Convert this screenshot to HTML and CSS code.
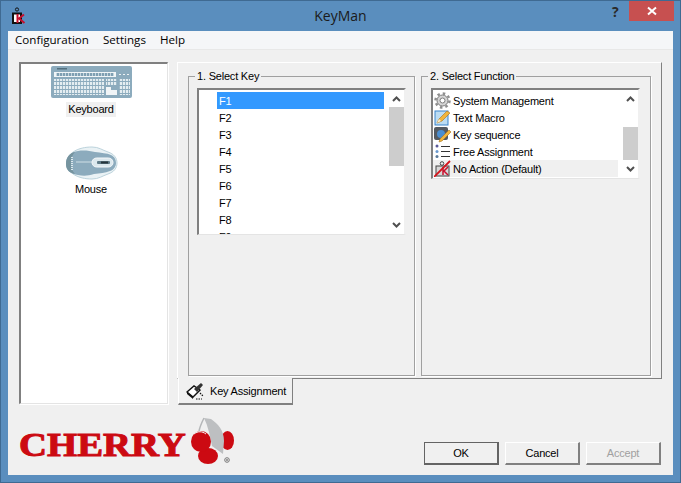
FILE: index.html
```html
<!DOCTYPE html>
<html lang="en">
<head>
<meta charset="utf-8">
<title>KeyMan</title>
<link rel="stylesheet" href="styles.css">
</head>
<body>
<div class="window">
  <header class="titlebar">
    <svg class="app-icon" width="16" height="18" viewBox="0 0 16 18">
      <circle cx="6" cy="2.500" r="1.600" fill="none" stroke="#111" stroke-width="1"/>
      <path d="M2 6.500h8v9.500H2z" fill="#fff" stroke="#111" stroke-width="2"/>
      <path d="M6.500 7v9M13 7.500L8 11.500l5.500 4.500" fill="none" stroke="#c8102e" stroke-width="2"/>
    </svg>
    <div class="title">KeyMan</div>
    <div class="help">?</div>
    <div class="close">
      <svg width="10" height="10" viewBox="0 0 10 10"><path d="M1 1.500l8 7M9 1.500l-8 7" stroke="#fff" stroke-width="2"/></svg>
    </div>
  </header>
  <nav class="menubar">
    <span class="menu-item">Configuration</span>
    <span class="menu-item">Settings</span>
    <span class="menu-item">Help</span>
  </nav>
  <main class="client">
    <div class="top-row">
      <aside class="sidebar">
        <div class="side-item side-keyboard">
          <svg width="81" height="32" viewBox="0 0 81 32">
            <defs>
              <pattern id="keys" width="3" height="4" patternUnits="userSpaceOnUse">
                <rect width="3" height="4" fill="#8cabbd"/>
                <rect width="2.200" height="3" fill="#e4edf1"/>
              </pattern>
              <pattern id="fkeys" width="3" height="4" patternUnits="userSpaceOnUse">
                <rect width="3" height="4" fill="#c3d5de"/>
                <rect width="2" height="4" fill="#7f9fb2"/>
              </pattern>
            </defs>
            <rect width="81" height="32" rx="2" fill="#8cabbd"/>
            <rect x="6" y="2" width="10" height="1.500" fill="#53707f"/>
            <rect x="3" y="6" width="62" height="5" fill="#f1f5f7"/>
            <rect x="5" y="7" width="58" height="3" fill="url(#fkeys)"/>
            <rect x="68" y="8" width="2" height="1" fill="#eef3f5"/>
            <rect x="72" y="8" width="2" height="1" fill="#eef3f5"/>
            <rect x="76" y="8" width="2" height="1" fill="#eef3f5"/>
            <rect x="3" y="13" width="50" height="16" fill="url(#keys)"/>
            <rect x="55" y="13" width="11" height="7" fill="url(#keys)"/>
            <rect x="55" y="21" width="11" height="8" fill="#f1f5f7"/>
            <rect x="60" y="21" width="6" height="3" fill="#8cabbd"/>
            <rect x="68" y="13" width="11" height="16" fill="url(#keys)"/>
          </svg>
          <span class="side-label side-label-active">Keyboard</span>
        </div>
        <div class="side-item side-mouse">
          <svg width="54" height="34" viewBox="0 0 54 34">
            <path d="M3 17C3 7 14 1 28 1c7 0 10 3 16 5 6 2 9 6 9 11s-3 9-9 11c-6 2-9 5-16 5C14 33 3 27 3 17z" fill="#eaf2f5" stroke="#bcd3dc"/>
            <path d="M2 18C2 10 7 6 14 5c6-1 12 0 17 1 6 1 12 1 16 3 4 2 5 5 5 8s-2 7-6 8c-5 2-10 2-16 3-6 2-11 2-16 1C7 28 2 25 2 18z" fill="#8cabbd"/>
            <path d="M2 18C2 11 6 7 11 6c-3 3-4 7-4 11s1 8 4 11C6 27 2 24 2 18z" fill="#76949f"/>
            <path d="M8 11v13" stroke="#dce8ed" stroke-width="2" stroke-dasharray="1 1"/>
            <path d="M12 16h16" stroke="#cfdfe6"/>
            <rect x="28" y="12" width="21" height="9" rx="4.500" fill="#dce8ed" stroke="#f5f8fa"/>
            <rect x="33" y="15" width="13" height="3" rx="1" fill="#5f7a86"/>
            <rect x="37" y="15.500" width="7" height="2" fill="#26343b"/>
          </svg>
          <span class="side-label">Mouse</span>
        </div>
      </aside>
      <section class="tabs">
        <div class="tab-panel">
          <div class="group group-key">
            <span class="legend">1. Select Key</span>
            <div class="listbox listbox-key">
              <ul class="items items-key">
                <li class="item item-selected">F1</li>
                <li class="item">F2</li>
                <li class="item">F3</li>
                <li class="item">F4</li>
                <li class="item">F5</li>
                <li class="item">F6</li>
                <li class="item">F7</li>
                <li class="item">F8</li>
                <li class="item">F9</li>
              </ul>
              <div class="scrollbar">
                <div class="arrow"><svg width="9" height="6" viewBox="0 0 9 6"><path d="M1 5l3.500-3.500L8 5" fill="none" stroke="#505050" stroke-width="2"/></svg></div>
                <div class="track"><div class="thumb thumb-key"></div></div>
                <div class="arrow"><svg width="9" height="6" viewBox="0 0 9 6"><path d="M1 1l3.500 3.500L8 1" fill="none" stroke="#505050" stroke-width="2"/></svg></div>
              </div>
            </div>
          </div>
          <div class="group group-func">
            <span class="legend">2. Select Function</span>
            <div class="listbox listbox-func">
              <ul class="items items-func">
                <li class="item func">
                  <svg class="func-icon" width="17" height="17" viewBox="0 0 17 17">
                    <circle cx="8.500" cy="8.500" r="5.500" fill="#d4d4d4" stroke="#7d7d7d"/>
                    <circle cx="8.500" cy="8.500" r="7" fill="none" stroke="#8e8e8e" stroke-width="2.500" stroke-dasharray="2.500 3"/>
                    <circle cx="8.500" cy="8.500" r="2.500" fill="#fff" stroke="#7d7d7d"/>
                  </svg>System Management
                </li>
                <li class="item func">
                  <svg class="func-icon" width="17" height="17" viewBox="0 0 17 17">
                    <rect x="1" y="2" width="13" height="14" fill="#bcdcf2" stroke="#3b83c9"/>
                    <path d="M3 14l2-4 8-8 3 2-8 8z" fill="#f2b53c" stroke="#a8741f" stroke-width=".6"/>
                    <path d="M3 14l2-4 2 2z" fill="#fbeccb"/>
                  </svg>Text Macro
                </li>
                <li class="item func">
                  <svg class="func-icon" width="17" height="17" viewBox="0 0 17 17">
                    <rect x="0" y="1" width="14" height="13" rx="2" fill="#545a61"/>
                    <circle cx="7" cy="8" r="4" fill="#4a8ed0"/>
                    <path d="M5 16l1-3 9-9 2 2-9 9z" fill="#f2b53c" stroke="#a8741f" stroke-width=".6"/>
                  </svg>Key sequence
                </li>
                <li class="item func">
                  <svg class="func-icon" width="17" height="17" viewBox="0 0 17 17">
                    <path d="M7 3.500h9M7 8.500h9M7 13.500h9" stroke="#333" stroke-width="1.200"/>
                    <circle cx="3" cy="3" r="1.500" fill="#5a5a9a"/>
                    <circle cx="3" cy="8.500" r="1.500" fill="#6a9ad0"/>
                    <circle cx="3" cy="13.500" r="1.500" fill="#5a7a9a"/>
                  </svg>Free Assignment
                </li>
                <li class="item func item-default">
                  <svg class="func-icon" width="17" height="17" viewBox="0 0 17 17">
                    <circle cx="8" cy="3.500" r="1.800" fill="none" stroke="#444"/>
                    <rect x="2" y="6" width="13" height="10" fill="#d8d8d8" stroke="#444"/>
                    <path d="M9 7v8M14 7l-4 4 4 4" fill="none" stroke="#c8102e" stroke-width="1.500"/>
                    <path d="M0 17L16 1" stroke="#d4141c" stroke-width="1.800"/>
                  </svg>No Action (Default)
                </li>
              </ul>
              <div class="scrollbar">
                <div class="arrow"><svg width="9" height="6" viewBox="0 0 9 6"><path d="M1 5l3.500-3.500L8 5" fill="none" stroke="#505050" stroke-width="2"/></svg></div>
                <div class="track"><div class="thumb thumb-func"></div></div>
                <div class="arrow"><svg width="9" height="6" viewBox="0 0 9 6"><path d="M1 1l3.500 3.500L8 1" fill="none" stroke="#505050" stroke-width="2"/></svg></div>
              </div>
            </div>
          </div>
        </div>
        <div class="tab-strip">
          <div class="tab">
            <svg class="tab-icon" width="18" height="18" viewBox="0 0 18 18">
              <path d="M1 10l7-6 6 4-7 7z" fill="#fff" stroke="#111" stroke-width="1.400"/>
              <path d="M1 10l6 5v2l-6-5z" fill="#111"/>
              <path d="M8 7l7-6 2 2-6 7z" fill="#333"/>
              <path d="M14 11l3 3M10 17h6" stroke="#111" stroke-width="1.200" stroke-dasharray="1.500 1"/>
            </svg>
            <span>Key Assignment</span>
          </div>
        </div>
      </section>
    </div>
    <footer class="footer">
      <div class="logo">
        <span class="logo-text">CHERRY</span>
        <svg class="logo-mark" width="50" height="52" viewBox="0 0 50 52">
          <ellipse cx="39.500" cy="24.500" rx="6.500" ry="9.500" fill="#cc0a12"/>
          <ellipse cx="20" cy="40" rx="10" ry="8" fill="#cc0a12"/>
          <path d="M16 2l7 1c7 5 13 11 13 22l-1 13-11-8C22 20 20 10 16 2z" fill="#bdbfc1"/>
          <path d="M16 2c-2 4-4 8-5 13" fill="none" stroke="#b5b7b9" stroke-width="1.500"/>
          <ellipse cx="13" cy="25.500" rx="10" ry="10.500" fill="#cc0a12"/>
          <path d="M6 18c4-3 8-3 12 0" fill="none" stroke="#f0f0f0" stroke-width="1"/>
          <circle cx="39" cy="44" r="2.300" fill="none" stroke="#777" stroke-width="1"/>
          <circle cx="39" cy="44" r=".9" fill="#777"/>
        </svg>
      </div>
      <div class="buttons">
        <button class="btn btn-default" type="button">OK</button>
        <button class="btn" type="button">Cancel</button>
        <button class="btn btn-disabled" type="button">Accept</button>
      </div>
    </footer>
  </main>
</div>
</body>
</html>
```

FILE: styles.css
```css
* { box-sizing: border-box; }
html, body { margin: 0; padding: 0; }
body {
  width: 681px;
  height: 483px;
  overflow: hidden;
  font-family: "Liberation Sans", Arial, sans-serif;
  font-size: 11px;
  letter-spacing: -.2px;
  color: #000;
}
ul { list-style: none; margin: 0; padding: 0; }

.window {
  width: 681px;
  height: 483px;
  display: flex;
  flex-direction: column;
  background: #5a8ebe;
  border: 1px solid #3f6a92;
  padding: 0 7px 7px;
}

.titlebar {
  height: 30px;
  flex: none;
  display: flex;
  align-items: flex-start;
  position: relative;
}
.app-icon { margin: 6px 0 0 3px; }
.title {
  position: absolute;
  left: 0;
  right: 0;
  top: 5px;
  text-align: center;
  font-family: "Open Sans", sans-serif;
  font-size: 14px;
  letter-spacing: 0;
  line-height: 19px;
  color: #1a1a1a;
}
.help {
  margin: 1px 0 0 auto;
  font-family: "Open Sans", sans-serif;
  font-weight: 700;
  font-size: 14px;
  letter-spacing: 0;
  line-height: 19px;
  color: #2a2a2a;
  width: 14px;
}
.close {
  width: 45px;
  height: 20px;
  margin: 0 -1px 0 3px;
  background: #c75050;
  display: flex;
  align-items: center;
  justify-content: center;
  z-index: 1;
}

.menubar {
  height: 19px;
  flex: none;
  display: flex;
  gap: 14px;
  align-items: center;
  padding: 0 0 1px 7px;
  background: #f5f6f8;
  border-bottom: 1px solid #e8e8e8;
  font-family: "Open Sans", sans-serif;
  font-size: 11.600px;
  letter-spacing: 0;
  line-height: 16px;
}

.client {
  flex: 1;
  background: #f0f0f0;
  padding: 12px 11px 0;
  display: flex;
  flex-direction: column;
}
.top-row {
  display: flex;
  gap: 9px;
}

.sidebar {
  width: 149px;
  height: 342px;
  background: #fff;
  border-top: 2px solid #808080;
  border-left: 2px solid #808080;
  border-right: 1px solid #e4e4e4;
  border-bottom: 1px solid #e4e4e4;
  box-shadow: 1px 1px 0 #fff;
  display: flex;
  flex-direction: column;
  align-items: center;
  padding: 2px 6px 0 0;
}
.side-item {
  display: flex;
  flex-direction: column;
  align-items: center;
}
.side-mouse { margin-top: 29px; }
.side-label {
  line-height: 15px;
  padding: 0 2px;
}
.side-keyboard .side-label { margin-top: 4px; }
.side-mouse .side-label { margin-top: 2px; }
.side-label-active { background: #f0f0f0; }

.tabs { width: 485px; }
.tab-panel {
  height: 317px;
  display: flex;
  gap: 6px;
  padding: 13px 0 0 10px;
  border-top: 1px solid #fff;
  border-left: 1px solid #fff;
  border-right: 1px solid #808080;
  border-bottom: 1px solid #808080;
}

.group {
  position: relative;
  height: 300px;
  border: 1px solid #a0a0a0;
  box-shadow: 1px 1px 0 #fff;
  padding-top: 11px;
}
.group-key { width: 227px; padding-left: 8px; }
.group-func { width: 230px; padding-left: 9px; }
.legend {
  position: absolute;
  left: 6px;
  top: -8px;
  background: #f0f0f0;
  padding: 0 2px;
  line-height: 14px;
  white-space: nowrap;
}

.listbox {
  width: 209px;
  display: flex;
  background: #fff;
  overflow: hidden;
  border-top: 2px solid #808080;
  border-left: 2px solid #808080;
  border-right: 2px solid #f0f0f0;
  border-bottom: 1px solid #e4e4e4;
}
.listbox-key { height: 147px; }
.listbox-func { height: 91px; }
.items {
  width: 190px;
  padding-top: 2px;
  overflow: hidden;
}
.items-key { padding-left: 18px; padding-right: 5px; }
.items-func { padding-right: 5px; }
.item {
  height: 17px;
  line-height: 18px;
  padding-left: 2px;
}
.item-selected { background: #3399ff; color: #fff; }
.func {
  display: flex;
  align-items: flex-start;
  white-space: nowrap;
  padding-left: 0;
}
.func-icon { flex: none; margin: 0 2px 0 1px; }
.item-default { background: #f0f0f0; }

.scrollbar {
  width: 15px;
  height: 143px;
  flex: none;
  display: flex;
  flex-direction: column;
}
.listbox-func .scrollbar { height: 87px; }
.arrow {
  flex: none;
  height: 17px;
  display: flex;
  align-items: center;
  justify-content: center;
}
.track { flex: 1; }
.thumb { background: #cdcdcd; }
.thumb-key { height: 59px; }
.thumb-func { height: 33px; margin-top: 20px; }

.tab-strip { display: flex; }
.tab {
  position: relative;
  width: 115px;
  height: 27px;
  margin: -1px 0 0 1px;
  background: #f0f0f0;
  border-left: 1px solid #fff;
  border-right: 1px solid #808080;
  border-bottom: 2px solid #808080;
  display: flex;
  align-items: center;
  gap: 6px;
  padding: 1px 0 0 7px;
  white-space: nowrap;
}
.tab-icon { flex: none; }

.footer {
  margin-top: 11px;
  display: flex;
  justify-content: space-between;
}
.logo {
  display: flex;
  align-items: flex-start;
}
.logo-text {
  width: 166px;
  margin-top: 14px;
  font-family: "Liberation Serif", serif;
  font-weight: 700;
  font-size: 33px;
  letter-spacing: 0;
  line-height: 30px;
  color: #cc0a12;
  -webkit-text-stroke: 1px #cc0a12;
  transform: scaleX(1.175);
  transform-origin: left center;
  white-space: nowrap;
}
.logo-mark { margin: 0 0 0 3px; }
.buttons {
  display: flex;
  gap: 6px;
  margin: 26px 1px 0 0;
}
.btn {
  width: 75px;
  height: 23px;
  padding: 0;
  background: #f0f0f0;
  font: inherit;
  letter-spacing: inherit;
  color: #000;
  border-top: 1px solid #fff;
  border-left: 1px solid #fff;
  border-right: 2px solid #808080;
  border-bottom: 2px solid #808080;
}
.btn-default {
  border: 1px solid #646464;
  border-right-width: 2px;
  border-bottom-width: 2px;
}
.btn-disabled { color: #a0a0a0; }
```
